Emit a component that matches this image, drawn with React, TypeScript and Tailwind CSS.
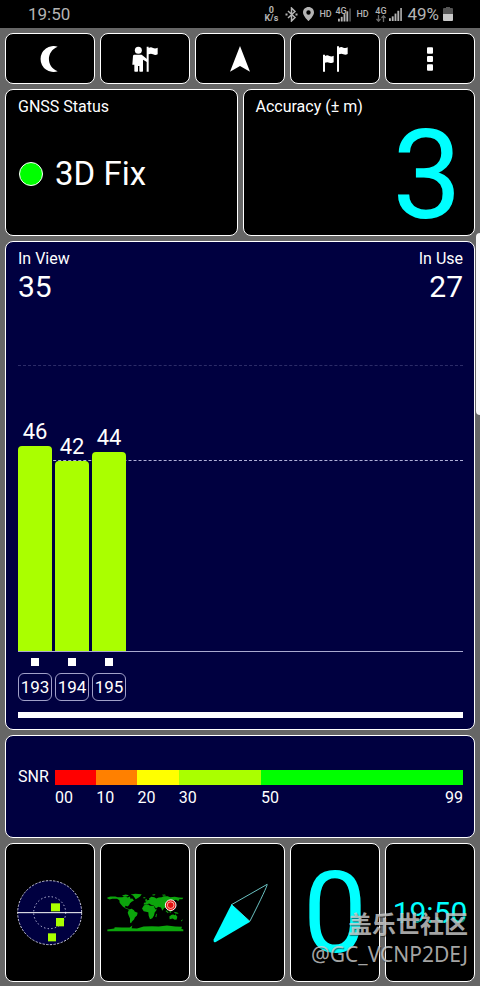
import React from 'react';

type Satellite = {
  id: number;
  snr: number;
  height: number;
};

const satellites: Satellite[] = [
  { id: 193, snr: 46, height: 205 },
  { id: 194, snr: 42, height: 190 },
  { id: 195, snr: 44, height: 199 },
];

const snrScale = [
  { from: '00', grow: 10, color: 'bg-[#ff0000]' },
  { from: '10', grow: 10, color: 'bg-[#ff8000]' },
  { from: '20', grow: 10, color: 'bg-[#ffff00]' },
  { from: '30', grow: 20, color: 'bg-[#aaff00]' },
  { from: '50', to: '99', grow: 49, color: 'bg-[#00ff00]' },
];

const cardClass = 'rounded-lg border border-white';

function SignalBars({ className, faded }: { className: string; faded?: boolean }) {
  return (
    <svg viewBox="0 0 14 14" className={className} fill="currentColor">
      <rect x="0" y="11" width="2" height="3" />
      <rect x="3" y="9" width="2" height="5" />
      <rect x="6" y="6" width="2" height="8" />
      <rect x="9" y="3" width="2" height="11" />
      <rect x="12" y="0" width="2" height="14" opacity={faded ? 0.4 : 0.85} />
    </svg>
  );
}

function StatusBar() {
  return (
    <header className="flex h-7 items-center justify-between bg-black pl-7 pr-[27px] text-[#b4b4b4]">
      <span className="text-[17px] leading-5">19:50</span>
      <div className="flex items-center">
        <div className="flex w-4 flex-col items-center text-[9px] font-bold leading-2">
          <span>0</span>
          <span>K/s</span>
        </div>
        <svg viewBox="0 0 13 15" className="ml-1.5 h-[15px] w-[13px]" fill="none" stroke="currentColor" strokeWidth="1.5">
          <path d="M3 4 L10 10.5 L6.5 14 V1 L10 4.5 L3 11" />
          <path d="M0.5 7.5 H2.5 M10.5 7.5 H12.5" strokeWidth="2" />
        </svg>
        <svg viewBox="0 0 11 14" className="ml-[5px] h-3.5 w-[11px]" fill="currentColor">
          <path fillRule="evenodd" d="M5.500 0 C2.400 0 0 2.400 0 5.400 C0 9 5.500 14 5.500 14 C5.500 14 11 9 11 5.400 C11 2.400 8.600 0 5.500 0 Z M5.500 3.300 A2.200 2.200 0 1 1 5.500 7.700 A2.200 2.200 0 1 1 5.500 3.300 Z" />
        </svg>
        <span className="ml-[5px] w-3 text-[9px] font-medium leading-3">HD</span>
        <div className="ml-1 flex h-[15px] w-4 items-start">
          <span className="w-[3px] whitespace-nowrap text-[9px] font-medium leading-2">4G</span>
          <SignalBars className="h-3.5 w-[13px] translate-y-px" faded />
        </div>
        <span className="ml-[5px] w-3 text-[9px] font-medium leading-3">HD</span>
        <div className="ml-[7px] flex w-[11px] flex-col items-center">
          <span className="text-[9px] font-medium leading-2">4G</span>
          <svg viewBox="0 0 10 7" className="h-[7px] w-2.5" fill="none" stroke="#6c6c6c" strokeWidth="1.300">
            <path d="M2.500 0 V6 M0.500 4 L2.500 6.200 L4.500 4 M7.500 7 V1 M5.500 3 L7.500 0.800 L9.500 3" />
          </svg>
        </div>
        <SignalBars className="ml-[3px] h-[13px] w-[13px]" />
        <span className="ml-[5px] text-[17px] leading-5">49%</span>
        <svg viewBox="0 0 10 14" className="ml-1 h-3.5 w-2.5">
          <path d="M3 0 H7 V1 H9 Q10 1 10 2 V7 H0 V2 Q0 1 1 1 H3 Z" fill="#555" />
          <path d="M0 7 H10 V13 Q10 14 9 14 H1 Q0 14 0 13 Z" fill="#c8c8c8" />
        </svg>
      </div>
    </header>
  );
}

const toolbar = [
  {
    label: 'Night mode',
    icon: <path d="M62 2 A39 39 0 1 0 62 76 C27 62 27 16 62 2 Z" />,
  },
  {
    label: 'Mark position',
    icon: (
      <>
        <circle cx="19" cy="13" r="10.500" />
        <path d="M6 26 H29 L46 40 V49 L33 41 V75 Q33 77 31 77 H24 Q22 77 22 75 V60 H18 V75 Q18 77 16 77 H9 Q7 77 7 75 V56 H1 L3 30 Q3 27 6 26 Z" />
        <path d="M44 2 H50 V6 Q57 2 63 6 Q70 9 77 5 V25 Q70 29 63 25 Q57 22 50 25 V77 H44 Z" />
      </>
    ),
  },
  { label: 'Navigate', icon: <path d="M39 0 L69 77 L39 60 L9 77 Z" /> },
  {
    label: 'Waypoints',
    icon: (
      <>
        <path d="M3 26 H9 V30 Q16 26 22 30 Q29 33 35 29 V49 Q29 53 22 50 Q16 47 9 50 V77 H3 Z" />
        <path d="M45 1 H51 V5 Q58 1 64 5 Q71 8 77 4 V24 Q71 28 64 25 Q58 22 51 25 V77 H45 Z" />
      </>
    ),
  },
  {
    label: 'Menu',
    icon: (
      <>
        <rect x="30" y="4" width="18" height="19" rx="3" />
        <rect x="30" y="30" width="18" height="18" rx="3" />
        <rect x="30" y="55" width="18" height="19" rx="3" />
      </>
    ),
  },
];

function Toolbar() {
  return (
    <nav className="grid grid-cols-5 gap-[5px]">
      {toolbar.map((item) => (
        <button
          key={item.label}
          type="button"
          aria-label={item.label}
          className={`${cardClass} flex h-[51px] items-center justify-center bg-black`}
        >
          <svg viewBox="0 0 78 78" className="size-[26px]" fill="white">
            {item.icon}
          </svg>
        </button>
      ))}
    </nav>
  );
}

function SatelliteChart() {
  return (
    <section className={`${cardClass} flex flex-1 flex-col bg-[#000040] pb-[11px] pl-3 pr-[11px] pt-2`}>
      <div className="flex justify-between">
        <div>
          <h2 className="text-[16px] leading-[18px]">In View</h2>
          <p className="text-[30px] leading-[38px]">35</p>
        </div>
        <div className="text-right">
          <h2 className="text-[16px] leading-[18px]">In Use</h2>
          <p className="text-[30px] leading-[38px]">27</p>
        </div>
      </div>

      <div className="relative flex flex-1 items-end gap-[3px] border-b border-[#a9a9d0]">
        <div className="absolute inset-x-0 bottom-[190px] border-t border-dashed border-[#b0b0d8]" />
        <div className="absolute inset-x-0 bottom-[285px] border-t border-dashed border-[#2c2c68]" />
        {satellites.map((sat) => (
          <div key={sat.id} className="relative w-[34px] text-center">
            <span className="block text-[22px] leading-7">{sat.snr}</span>
            <div className="rounded-t bg-[#aaff00]" style={{ height: sat.height }} />
          </div>
        ))}
      </div>

      <ul className="flex gap-[3px] pt-1.5">
        {satellites.map((sat) => (
          <li key={sat.id} className="flex w-[34px] flex-col items-center gap-[7px]">
            <span className="size-2 bg-white" />
            <span className="flex h-7 w-full items-center justify-center rounded-md border border-[#a0a0c8] text-[17px] leading-5">
              {sat.id}
            </span>
          </li>
        ))}
      </ul>
      <div className="mt-[11px] h-1.5 bg-white" />
    </section>
  );
}

function SnrLegend() {
  return (
    <section className={`${cardClass} flex h-[103px] gap-[5px] bg-[#000040] pl-3 pr-[11px] pt-8 text-[16px]`}>
      <span className="w-8 leading-[18px]">SNR</span>
      <div className="flex flex-1 pt-[2px]">
        {snrScale.map((step) => (
          <div key={step.from} className="basis-0" style={{ flexGrow: step.grow }}>
            <div className={`h-[15px] ${step.color}`} />
            <div className="flex justify-between pt-1 leading-[18px]">
              <span>{step.from}</span>
              {step.to && <span>{step.to}</span>}
            </div>
          </div>
        ))}
      </div>
    </section>
  );
}

function RadarIcon() {
  return (
    <svg viewBox="51 125 198 198" className="size-[66px]">
      <circle cx="149" cy="223" r="96" fill="#000040" stroke="#e8e8ff" strokeWidth="2.500" strokeDasharray="7 4" />
      <circle cx="149" cy="223" r="48" fill="none" stroke="#e8e8ff" strokeWidth="2.500" strokeDasharray="4 7" />
      <path d="M52 223 H246" stroke="white" strokeWidth="3" />
      <g fill="#aaff00">
        <rect x="153" y="195" width="27" height="24" />
        <rect x="168" y="239" width="24" height="25" />
        <rect x="144" y="285" width="24" height="24" />
      </g>
    </svg>
  );
}

function WorldIcon() {
  return (
    <svg viewBox="320 168 231 116" className="h-[39px] w-[77px]">
      <g fill="#0ca50c">
        {/* North America */}
        <path d="M321 181 L330 178 L345 178 L352 180 L366 180 L374 177 L382 181 L389 178 L390 185 L396 184 L401 190 L394 194 L389 198 L386 204 L381 208 L376 206 L373 210 L379 213 L388 216 L386 218 L376 214 L368 209 L362 202 L358 197 L357 189 L350 185 L336 185 L328 187 L321 184 Z" />
        <path d="M365 175 L376 172 L386 174 L380 178 L370 178 Z" />
        {/* Greenland */}
        <path d="M391 172 L405 170 L424 171 L420 177 L414 182 L406 186 L402 180 L398 175 Z" />
        {/* South America */}
        <path d="M386 217 L394 215 L401 219 L403 223 L412 227 L410 235 L404 240 L401 247 L395 253 L392 258 L389 256 L389 244 L385 235 L382 227 Z" />
        {/* Europe and Asia */}
        <path d="M430 202 L431 197 L436 196 L439 190 L447 188 L446 184 L453 179 L462 180 L468 184 L475 181 L484 180 L490 177 L502 177 L510 180 L523 179 L536 181 L549 182 L546 186 L537 186 L534 192 L527 188 L520 190 L524 196 L518 202 L514 207 L508 211 L504 215 L503 222 L498 214 L492 212 L486 221 L482 211 L474 209 L467 214 L460 205 L452 203 L446 199 L439 203 Z" />
        <path d="M435 187 L439 185 L440 192 L435 193 Z M429 180 H435 V183 H429 Z M456 172 L465 171 L464 174 L457 175 Z M485 173 L494 172 L497 175 L488 176 Z" />
        {/* Africa */}
        <path d="M431 204 L444 202 L449 206 L460 206 L465 216 L470 217 L463 226 L461 235 L456 243 L449 246 L445 236 L444 225 L430 222 L425 214 Z M467 231 L470 229 L468 240 L465 239 Z" />
        {/* Indonesia and Australia */}
        <path d="M497 219 L505 226 L503 228 L496 222 Z M508 219 L514 218 L512 227 L507 225 Z M520 224 L531 226 L535 230 L525 229 Z M507 238 L514 233 L519 232 L523 234 L525 231 L531 239 L529 247 L523 248 L517 244 L508 246 Z M542 250 L548 246 L546 250 L543 253 Z" />
        {/* Antarctica */}
        <path d="M321 277 L342 274 L343 270 L365 271 L388 271 L396 265 L394 273 L410 274 L430 268 L455 267 L475 268 L500 265 L525 268 L545 269 L543 275 L549 277 V282 H321 Z" />
      </g>
      <circle cx="511" cy="204" r="16" fill="#e01010" stroke="white" strokeWidth="3" />
      <circle cx="511" cy="204" r="10" fill="none" stroke="#ffd0c0" strokeWidth="2.500" />
    </svg>
  );
}

function CompassIcon() {
  return (
    <svg viewBox="62 133 176 180" className="h-[60px] w-[59px]">
      <path d="M123 198 L230 137 Q231 143 178 248 Z" fill="none" stroke="#80e8e8" strokeWidth="2.500" />
      <path d="M123 197 L179 249 L76 310 Q69 314 69 303 Z" fill="#00ffff" />
    </svg>
  );
}

function BottomCards() {
  const tile = `${cardClass} flex h-[139px] items-center justify-center overflow-hidden bg-black text-[#00ffff]`;

  return (
    <div className="grid grid-cols-5 gap-[5px]">
      <button type="button" aria-label="Sky view" className={tile}>
        <RadarIcon />
      </button>
      <button type="button" aria-label="World map" className={tile}>
        <WorldIcon />
      </button>
      <button type="button" aria-label="Compass" className={tile}>
        <CompassIcon />
      </button>
      <button type="button" className={`${tile} text-[114px] leading-none`}>
        0
      </button>
      <button type="button" className={`${tile} text-[30px] leading-9`}>
        19:50
      </button>
    </div>
  );
}

export default function App() {
  return (
    <div className="relative flex min-h-screen flex-col overflow-hidden bg-[#666666] font-['Roboto',sans-serif] text-white">
      <StatusBar />

      <main className="flex flex-1 flex-col gap-[5px] px-[5px] pb-1 pt-[5px]">
        <Toolbar />

        <div className="grid grid-cols-2 gap-[5px]">
          <section className={`${cardClass} h-[147px] bg-black px-3 pt-2`}>
            <h2 className="text-[16px] leading-[18px]">GNSS Status</h2>
            <div className="mt-9 flex items-center gap-3 pl-px">
              <span className="size-6 rounded-full border border-white bg-[#00ff00]" />
              <span className="text-[33px] leading-11">3D Fix</span>
            </div>
          </section>
          <section className={`${cardClass} h-[147px] bg-black px-3 pt-2`}>
            <h2 className="text-[16px] leading-[18px]">Accuracy (± m)</h2>
            <p className="text-right text-[124px] leading-[120px] text-[#00ffff]">3</p>
          </section>
        </div>

        <SatelliteChart />
        <SnrLegend />
        <BottomCards />
      </main>

      {/* edge panel handle */}
      <div className="absolute right-0 top-[233px] h-[182px] w-1 rounded-l bg-[#f8f8f8]" />

      <div className="pointer-events-none absolute bottom-[18px] right-3 text-right font-['Noto_Sans','Noto_Sans_CJK_SC',sans-serif] text-[#d2d2d2]/80 [text-shadow:1px_1px_1px_rgba(0,0,0,0.5)]">
        <p className="text-[24px] font-bold leading-8">盖乐世社区</p>
        <p className="text-[21px] leading-7">@GC_VCNP2DEJ</p>
      </div>
    </div>
  );
}
